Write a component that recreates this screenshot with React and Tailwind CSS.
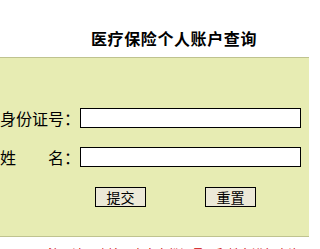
import React from "react";

const font = { fontFamily: '"SimSun", "Noto Sans CJK SC", sans-serif' };

export default function App() {
  return (
    <div
      className="w-[309px] h-[249px] overflow-hidden bg-white text-black"
      style={font}
    >
      {/* title */}
      <div className="h-[57px] pt-[30px] pl-[91px]">
        <h1 className="text-[16px] leading-[17px] font-bold tracking-[0.6px] whitespace-nowrap">
          医疗保险个人账户查询
        </h1>
      </div>

      {/* form panel */}
      <form className="h-[180px] bg-[#e7ecb3] border-y border-[#bfc38f] pt-[50px]">
        <div className="flex items-center h-[20px]">
          <label className="w-[80px] text-[16px] leading-[16px] whitespace-nowrap">
            身份证号：
          </label>
          <input
            type="text"
            className="w-[221px] h-[20px] bg-white border border-black outline-none"
          />
        </div>
        <div className="flex items-center h-[20px] mt-[19px]">
          <label className="w-[80px] text-[16px] leading-[16px] whitespace-pre">
            姓　　名：
          </label>
          <input
            type="text"
            className="w-[221px] h-[20px] bg-white border border-black outline-none"
          />
        </div>
        <div className="flex h-[20px] mt-[20px] pl-[95px] gap-[59px]">
          <button
            type="submit"
            className="w-[51px] h-[20px] bg-[#ece9d8] border border-black text-[14px] leading-[14px] text-black"
          >
            提交
          </button>
          <button
            type="reset"
            className="w-[51px] h-[20px] bg-[#ece9d8] border border-black text-[14px] leading-[14px] text-black"
          >
            重置
          </button>
        </div>
      </form>

      {/* note */}
      <p className="pt-[10px] pl-[48px] text-[12px] leading-[14px] text-[#cc0000] whitespace-nowrap">
        注：请正确输入本人身份证号码和姓名进行查询
      </p>
    </div>
  );
}
